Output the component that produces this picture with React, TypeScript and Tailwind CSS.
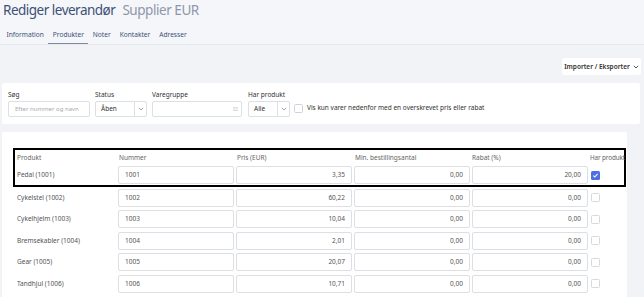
import React from "react";

const rows = [
  { name: "Pedal (1001)", num: "1001", pris: "3,35", min: "0,00", rabat: "20,00", has: true },
  { name: "Cykelstel (1002)", num: "1002", pris: "60,22", min: "0,00", rabat: "0,00", has: false },
  { name: "Cykelhjelm (1003)", num: "1003", pris: "10,04", min: "0,00", rabat: "0,00", has: false },
  { name: "Bremsekabler (1004)", num: "1004", pris: "2,01", min: "0,00", rabat: "0,00", has: false },
  { name: "Gear (1005)", num: "1005", pris: "20,07", min: "0,00", rabat: "0,00", has: false },
  { name: "Tandhjul (1006)", num: "1006", pris: "10,71", min: "0,00", rabat: "0,00", has: false },
];

const grid = "grid grid-cols-[101px_116px_116px_116px_116px_auto] gap-x-[2px] items-center";

function Chevron({ className = "" }: { className?: string }) {
  return (
    <svg width="6" height="4" viewBox="0 0 6 4" className={className}>
      <path d="M0.8 0.8 L3 3 L5.2 0.8" fill="none" stroke="currentColor" strokeWidth="0.9" />
    </svg>
  );
}

function Box({ checked }: { checked: boolean }) {
  if (checked)
    return (
      <div className="w-[9px] h-[9px] rounded-[1.5px] bg-[#4d6fe0] flex items-center justify-center">
        <svg width="7" height="7" viewBox="0 0 8 8">
          <path d="M1.6 4.2 L3.2 5.7 L6.4 2.2" fill="none" stroke="white" strokeWidth="1.2" />
        </svg>
      </div>
    );
  return <div className="w-[9px] h-[9px] rounded-[1.5px] border border-[#d6d9de] bg-white" />;
}

function Cell({ v, right }: { v: string; right?: boolean }) {
  return (
    <div
      className={`h-[18px] border border-[#dcdfe3] rounded-[2px] bg-white flex items-center px-[6px] text-[6.5px] text-[#555] ${
        right ? "justify-end" : ""
      }`}
    >
      {v}
    </div>
  );
}

function Row({ r, h }: { r: (typeof rows)[number]; h: string }) {
  return (
    <div className={`${grid} ${h}`}>
      <div className="pl-[2px] text-[6.5px] text-[#555]">{r.name}</div>
      <Cell v={r.num} />
      <Cell v={r.pris} right />
      <Cell v={r.min} right />
      <Cell v={r.rabat} right />
      <div className="pl-[1px]">
        <Box checked={r.has} />
      </div>
    </div>
  );
}

export default function App() {
  return (
    <div
      className="w-[644px] h-[297px] overflow-hidden bg-[#f2f3f7] text-[#333]"
      style={{ fontFamily: '"Noto Sans", "Open Sans", sans-serif' }}
    >
      {/* header */}
      <div className="bg-[#f5f6fa] border-b border-[#e6e8ee] px-[2px]">
        <div className="pt-[2px] h-[25px] flex items-baseline gap-[7px] pl-[1px]">
          <span className="text-[13.5px] leading-[16px] text-[#3d5076] tracking-[-0.5px]">Rediger leverandør</span>
          <span className="text-[13.5px] leading-[16px] text-[#8f97a8] tracking-[-0.45px]">Supplier EUR</span>
        </div>
        <div className="flex h-[19px] items-center text-[6.6px] text-[#3d5076] pl-[0px]">
          <div className="h-full flex items-center px-[4.5px]">Information</div>
          <div className="h-full flex items-center px-[4.5px] border-b-[1.5px] border-[#7c8aa6] pt-[1px]">Produkter</div>
          <div className="h-full flex items-center px-[4.5px]">Noter</div>
          <div className="h-full flex items-center px-[4.5px]">Kontakter</div>
          <div className="h-full flex items-center px-[4.5px]">Adresser</div>
        </div>
      </div>

      {/* toolbar */}
      <div className="flex justify-end pt-[13px] pr-[3px]">
        <div className="h-[17px] w-[79px] bg-white rounded-[2px] flex items-center justify-center gap-[3px] text-[6.5px] font-semibold text-[#333]">
          Importer / Eksporter
          <Chevron className="text-[#444]" />
        </div>
      </div>

      {/* filters */}
      <div className="mx-[2px] mr-[4px] mt-[8px] h-[41px] bg-white rounded-[2px] px-[6px] pt-[7px] flex gap-[5px]">
        <div className="flex flex-col">
          <div className="text-[6.5px] text-[#333] h-[11px]">Søg</div>
          <div className="w-[82px] h-[16px] border border-[#dcdfe3] rounded-[2px] flex items-center px-[6px] text-[6px] text-[#aaa]">
            Efter nummer og navn
          </div>
        </div>
        <div className="flex flex-col">
          <div className="text-[6.5px] text-[#333] h-[11px]">Status</div>
          <div className="w-[52px] h-[16px] border border-[#dcdfe3] rounded-[2px] flex items-center text-[6.5px]">
            <div className="flex-1 px-[5px]">Åben</div>
            <div className="w-[12px] h-full border-l border-[#dcdfe3] flex items-center justify-center text-[#999]">
              <Chevron />
            </div>
          </div>
        </div>
        <div className="flex flex-col">
          <div className="text-[6.5px] text-[#333] h-[11px]">Varegruppe</div>
          <div className="w-[90px] h-[16px] border border-[#dcdfe3] rounded-[2px] flex items-center justify-end pr-[3px]">
            <svg width="5" height="4" viewBox="0 0 5 4">
              <path d="M0 0.5 H5 M0 2 H5 M0 3.5 H5" stroke="#c4c8ce" strokeWidth="0.6" />
            </svg>
          </div>
        </div>
        <div className="flex flex-col ml-[1px]">
          <div className="text-[6.5px] text-[#333] h-[11px]">Har produkt</div>
          <div className="flex items-center gap-[4px]">
            <div className="w-[42px] h-[16px] border border-[#dcdfe3] rounded-[2px] flex items-center text-[6.5px]">
              <div className="flex-1 px-[5px]">Alle</div>
              <div className="w-[12px] h-full border-l border-[#dcdfe3] flex items-center justify-center text-[#999]">
                <Chevron />
              </div>
            </div>
            <div className="w-[9px] h-[9px] border border-[#cfd3d8] rounded-[1.5px] mb-[2px]" />
            <div className="text-[6.5px] text-[#333] mb-[2px]">
              Vis kun varer nedenfor med en overskrevet pris eller rabat
            </div>
          </div>
        </div>
      </div>

      {/* table */}
      <div className="ml-[2px] mt-[8px] w-[625px] h-[200px] bg-white rounded-t-[2px] pl-[11px] pt-[16px]">
        <div className="w-[613px] border-2 border-black">
          <div className={`${grid} h-[15px] text-[6.5px] text-[#666]`}>
            <div className="pl-[2px]">Produkt</div>
            <div className="pl-[1px]">Nummer</div>
            <div className="pl-[1px]">Pris (EUR)</div>
            <div className="pl-[1px]">Min. bestillingsantal</div>
            <div>Rabat (%)</div>
            <div className="whitespace-nowrap text-[6.3px] tracking-[-0.1px]">Har produkt</div>
          </div>
          <Row r={rows[0]} h="h-[20px]" />
        </div>
        <div className="pl-[2px] w-[613px]">
          {rows.slice(1).map((r) => (
            <Row key={r.num} r={r} h="h-[21.5px]" />
          ))}
        </div>
      </div>
    </div>
  );
}
